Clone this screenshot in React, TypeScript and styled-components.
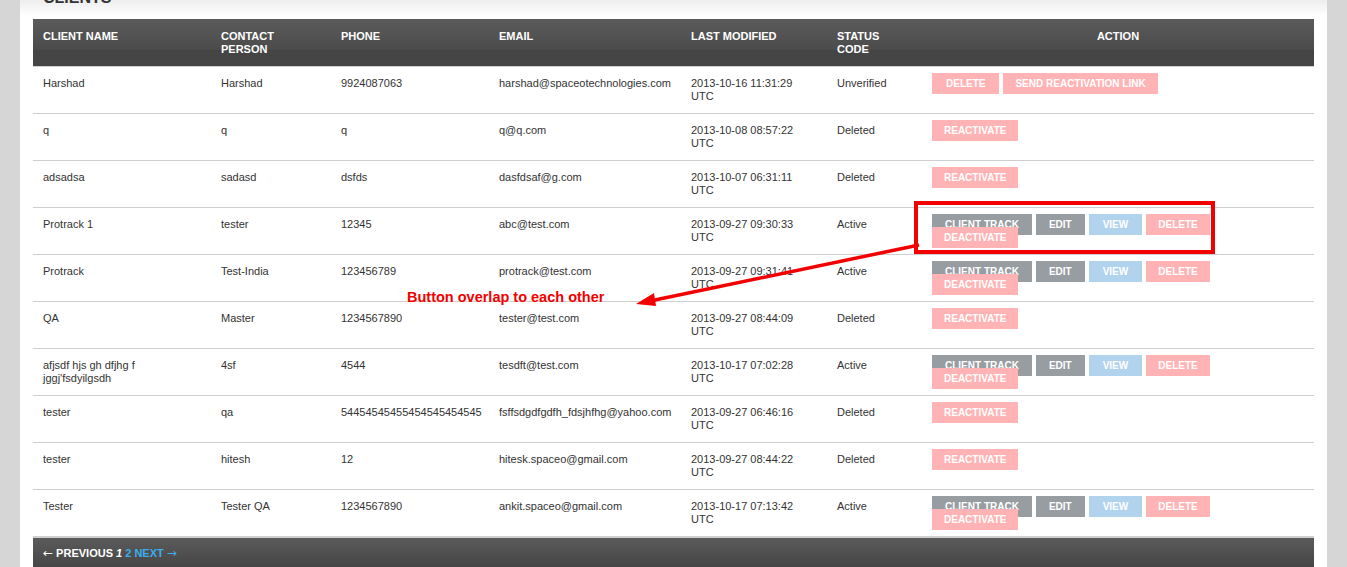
import React, { FC, Fragment } from "react";
import styled, { createGlobalStyle } from "styled-components";

type Kind = "pink" | "gray" | "blue";
type Client = {
  name: string;
  contact: string;
  phone: string;
  email: string;
  modified: string;
  status: string;
  actions: { label: string; kind: Kind; pad?: number }[];
};

const fullActions: Client["actions"] = [
  { label: "Client Track", kind: "gray", pad: 13 },
  { label: "Edit", kind: "gray", pad: 13 },
  { label: "View", kind: "blue", pad: 14 },
  { label: "Delete", kind: "pink" },
  { label: "Deactivate", kind: "pink" },
];
const reactivate: Client["actions"] = [{ label: "Reactivate", kind: "pink" }];

const clients: Client[] = [
  {
    name: "Harshad",
    contact: "Harshad",
    phone: "9924087063",
    email: "harshad@spaceotechnologies.com",
    modified: "2013-10-16 11:31:29",
    status: "Unverified",
    actions: [
      { label: "Delete", kind: "pink", pad: 14 },
      { label: "Send Reactivation Link", kind: "pink" },
    ],
  },
  { name: "q", contact: "q", phone: "q", email: "q@q.com", modified: "2013-10-08 08:57:22", status: "Deleted", actions: reactivate },
  { name: "adsadsa", contact: "sadasd", phone: "dsfds", email: "dasfdsaf@g.com", modified: "2013-10-07 06:31:11", status: "Deleted", actions: reactivate },
  { name: "Protrack 1", contact: "tester", phone: "12345", email: "abc@test.com", modified: "2013-09-27 09:30:33", status: "Active", actions: fullActions },
  { name: "Protrack", contact: "Test-India", phone: "123456789", email: "protrack@test.com", modified: "2013-09-27 09:31:41", status: "Active", actions: fullActions },
  { name: "QA", contact: "Master", phone: "1234567890", email: "tester@test.com", modified: "2013-09-27 08:44:09", status: "Deleted", actions: reactivate },
  { name: "afjsdf hjs gh dfjhg f jggj'fsdyilgsdh", contact: "4sf", phone: "4544", email: "tesdft@test.com", modified: "2013-10-17 07:02:28", status: "Active", actions: fullActions },
  { name: "tester", contact: "qa", phone: "54454545455454545454545", email: "fsffsdgdfgdfh_fdsjhfhg@yahoo.com", modified: "2013-09-27 06:46:16", status: "Deleted", actions: reactivate },
  { name: "tester", contact: "hitesh", phone: "12", email: "hitesk.spaceo@gmail.com", modified: "2013-09-27 08:44:22", status: "Deleted", actions: reactivate },
  { name: "Tester", contact: "Tester QA", phone: "1234567890", email: "ankit.spaceo@gmail.com", modified: "2013-10-17 07:13:42", status: "Active", actions: fullActions },
];

const colors: Record<Kind, string> = {
  pink: "#ffb3b4",
  gray: "#989da2",
  blue: "#b2d3ee",
};

const App: FC = () => {
  return (
    <Page>
      <GlobalStyle />
      <Panel>
        <Heading>Clients</Heading>
        <Table>
          <colgroup>
            <col style={{ width: 178 }} />
            <col style={{ width: 120 }} />
            <col style={{ width: 158 }} />
            <col style={{ width: 192 }} />
            <col style={{ width: 146 }} />
            <col style={{ width: 95 }} />
            <col style={{ width: 392 }} />
          </colgroup>
          <thead>
            <tr>
              <Th>Client Name</Th>
              <Th>Contact Person</Th>
              <Th>Phone</Th>
              <Th>Email</Th>
              <Th>Last Modified</Th>
              <Th>Status Code</Th>
              <Th $center>Action</Th>
            </tr>
          </thead>
          <tbody>
            {clients.map((c, i) => (
              <Row key={i}>
                <Td>{c.name}</Td>
                <Td>{c.contact}</Td>
                <Td>{c.phone}</Td>
                <Td>{c.email}</Td>
                <Td>{c.modified} UTC</Td>
                <Td>{c.status}</Td>
                <Td>
                  <Actions>
                    {c.actions.map((a, j) => (
                      <Fragment key={j}>
                        {/* zero-width space lets the buttons wrap (and overlap) */}
                        {j > 0 && "\u200B"}
                        <ActionButton $kind={a.kind} $pad={a.pad ?? 12}>
                          {a.label}
                        </ActionButton>
                      </Fragment>
                    ))}
                  </Actions>
                </Td>
              </Row>
            ))}
          </tbody>
        </Table>
        <Pager>
          <PagerText>
            <ArrowGlyph>←</ArrowGlyph> PREVIOUS{" "}
          </PagerText>
          <Current>1</Current>
          <PagerLink>
            {" "}2 NEXT <ArrowGlyph>→</ArrowGlyph>
          </PagerLink>
        </Pager>
      </Panel>

      <Callout />
      <Arrow width="290" height="70" viewBox="0 0 290 70">
        <line x1="285" y1="5" x2="16" y2="61" stroke="#f20000" strokeWidth="3.5" />
        <polygon points="2,64 20,53 22,66" fill="#f20000" />
      </Arrow>
      <Note>Button overlap to each other</Note>
    </Page>
  );
};

const GlobalStyle = createGlobalStyle`
  html, body {
    margin: 0;
    padding: 0;
    background: #d6d6d6;
    overflow: hidden;
  }
`;

const Page = styled.div`
  position: relative;
  height: 567px;
  font-family: "Liberation Sans", Arial, sans-serif;
`;

const Panel = styled.div`
  margin: 0 20px;
  height: 567px;
  padding: 0 13px;
  background: linear-gradient(#ededed 0, #ffffff 16px);
  overflow: hidden;
`;

const Heading = styled.h2`
  margin: -10px 0 13px;
  padding-left: 10px;
  height: 16px;
  font-size: 16px;
  line-height: 16px;
  font-weight: bold;
  text-transform: uppercase;
  color: #333;
`;

const Table = styled.table`
  width: 1281px;
  table-layout: fixed;
  border-collapse: collapse;
`;

const Th = styled.th<{ $center?: boolean }>`
  padding: 11px 10px 10px;
  vertical-align: top;
  text-align: ${(p) => (p.$center ? "center" : "left")};
  font-size: 11px;
  line-height: 13px;
  font-weight: bold;
  text-transform: uppercase;
  color: #fff;
  background: linear-gradient(
    #5b5b5b 0,
    #4b4b4b 31px,
    #404040 31px,
    #454545 32px,
    #444 100%
  );
  border-bottom: 1px solid #d0d0d0;
`;

const Row = styled.tr`
  border-bottom: 1px solid #cfcfcf;
`;

const Td = styled.td`
  padding: 10px 10px 10px;
  vertical-align: top;
  font-size: 11px;
  line-height: 13px;
  color: #333;
`;

const Actions = styled.div`
  width: 290px;
`;

const ActionButton = styled.span<{ $kind: Kind; $pad: number }>`
  display: inline;
  white-space: nowrap;
  margin-right: 4px;
  padding: 5px ${(p) => p.$pad}px;
  font-size: 10px;
  line-height: 13px;
  font-weight: bold;
  text-transform: uppercase;
  color: #fff;
  background: ${(p) => colors[p.$kind]};
`;

const Pager = styled.div`
  width: 1281px;
  height: 40px;
  box-sizing: border-box;
  padding: 9px 10px;
  font-size: 11px;
  line-height: 13px;
  font-weight: bold;
  background: linear-gradient(#5b5b5b 0, #444 31px);
  border-top: 1px solid #d0d0d0;
`;

const ArrowGlyph = styled.span`
  font-family: "DejaVu Sans", sans-serif;
  font-weight: normal;
  font-size: 12px;
`;

const PagerText = styled.span`
  color: #fff;
`;

const Current = styled.em`
  color: #fff;
`;

const PagerLink = styled.span`
  color: #3badea;
`;

const Callout = styled.div`
  position: absolute;
  left: 914px;
  top: 201px;
  width: 293px;
  height: 45px;
  border: 4px solid #f20000;
`;

const Arrow = styled.svg`
  position: absolute;
  left: 634px;
  top: 240px;
`;

const Note = styled.div`
  position: absolute;
  left: 407px;
  top: 289px;
  font-size: 14.5px;
  line-height: 16px;
  font-weight: bold;
  color: #f20000;
`;

export default App;
